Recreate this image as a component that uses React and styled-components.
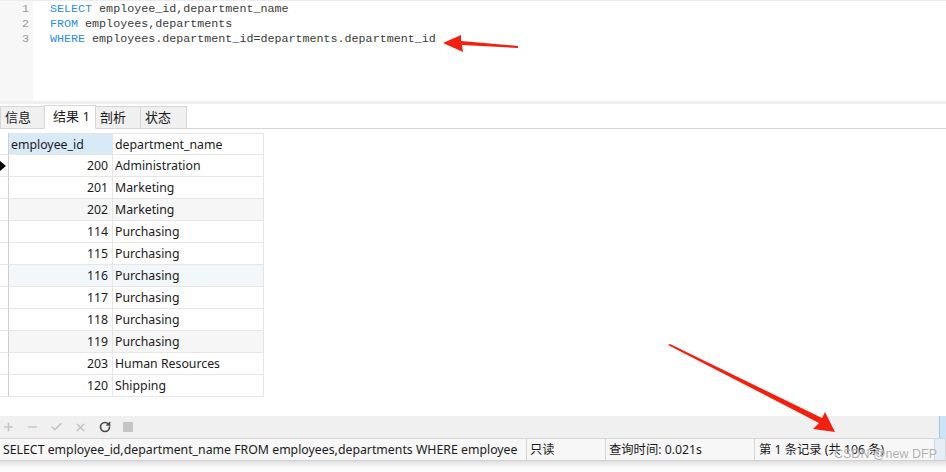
import React from "react";
import styled, { createGlobalStyle } from "styled-components";
import { Plus, Minus, Check, X, RotateCw } from "lucide-react";

const GlobalStyle = createGlobalStyle`
  body {
    margin: 0;
    background: #fff;
    overflow: hidden;
  }
`;

const UI_FONT = `"Noto Sans", "Noto Sans CJK SC", sans-serif`;

const Window = styled.div`
  position: relative;
  width: 946px;
  height: 472px;
  display: flex;
  flex-direction: column;
  font-family: ${UI_FONT};
  font-size: 12.3px;
  color: #1a1a1a;
  overflow: hidden;
`;

const Editor = styled.div`
  height: 101px;
  display: flex;
  border-top: 1px solid #ececec;
  box-sizing: border-box;
`;

const Gutter = styled.div`
  width: 33px;
  background: #f7f7f7;
  padding-top: 1px;
  box-sizing: border-box;
`;

const LineNo = styled.div`
  height: 15px;
  line-height: 15px;
  padding-right: 4px;
  text-align: right;
  font-family: "Liberation Mono", monospace;
  font-size: 11.7px;
  color: #9a9a9a;
`;

const Code = styled.div`
  flex: 1;
  padding: 1px 0 0 17px;
`;

const CodeLine = styled.div`
  height: 15px;
  line-height: 15px;
  font-family: "Liberation Mono", monospace;
  font-size: 11.7px;
  color: #3a3a3a;
  white-space: pre;
`;

const Kw = styled.span`
  color: #2b8cf0;
`;

const Band = styled.div`
  height: 3px;
  background: #efefef;
`;

const TabBar = styled.div`
  height: 25px;
  display: flex;
  align-items: flex-end;
  border-bottom: 1px solid #d6d6d6;
  box-sizing: border-box;
`;

const Tab = styled.div`
  height: ${(p) => (p.$active ? 24 : 22)}px;
  width: ${(p) => p.$w}px;
  box-sizing: border-box;
  padding-left: ${(p) => (p.$active ? 8 : 4)}px;
  line-height: 21px;
  background: ${(p) => (p.$active ? "#fff" : "#f0f0f0")};
  border: 1px solid #d6d6d6;
  border-bottom: ${(p) => (p.$active ? "1px solid #fff" : "none")};
  margin-bottom: ${(p) => (p.$active ? -1 : 0)}px;
  margin-left: ${(p) => (p.$first ? 0 : -1)}px;
  font-size: 13px;
`;

const Results = styled.div`
  flex: 1;
  padding-top: 4px;
`;

const Grid = styled.div`
  display: grid;
  grid-template-columns: 9px 104px 151px;
  width: 264px;
`;

const Cell = styled.div`
  height: 22px;
  line-height: 21px;
  box-sizing: border-box;
  border-right: 1px solid #e6e6e6;
  border-bottom: 1px solid #e6e6e6;
  padding: 0 ${(p) => (p.$num ? 4 : 2)}px;
  text-align: ${(p) => (p.$num ? "right" : "left")};
  background: ${(p) => p.$bg || "#fff"};
  white-space: nowrap;
  overflow: hidden;
`;

const HeadCell = styled(Cell)`
  background: ${(p) => (p.$sel ? "#d8e9f8" : "#fff")};
  border-top: 1px solid #e6e6e6;
`;

const Marker = styled.div`
  height: 22px;
  box-sizing: border-box;
  border-right: 1px solid #cfcfcf;
  border-bottom: 1px solid #e6e6e6;
  display: flex;
  align-items: center;
  &::before {
    content: "";
    display: ${(p) => (p.$current ? "block" : "none")};
    border-left: 6px solid #000;
    border-top: 5px solid transparent;
    border-bottom: 5px solid transparent;
  }
`;

const Toolbar = styled.div`
  height: 22px;
  background: #f0f0f0;
  display: flex;
  align-items: center;
  gap: 11px;
  padding-left: 2px;
  box-sizing: border-box;
`;

const ToolIcon = styled.span`
  width: 13px;
  height: 13px;
  display: flex;
  align-items: center;
  justify-content: center;
  color: ${(p) => (p.$on ? "#4a4a4a" : "#c4c4c4")};
`;

const Stop = styled.span`
  width: 10px;
  height: 10px;
  background: #c4c4c4;
  margin-left: 1px;
`;

const StatusBar = styled.div`
  height: 23px;
  display: flex;
  background: #f7f7f7;
  border-top: 1px solid #d6d6d6;
  border-bottom: 1px solid #cfcfcf;
  box-sizing: border-box;
`;

const StatusCell = styled.div`
  width: ${(p) => p.$w}px;
  flex: ${(p) => (p.$grow ? 1 : "none")};
  box-sizing: border-box;
  padding-left: ${(p) => p.$pad ?? 3}px;
  line-height: 21px;
  border-right: 1px solid #d6d6d6;
  white-space: nowrap;
  overflow: hidden;
  background: ${(p) => p.$bg || "transparent"};
`;

const Shadow = styled.div`
  height: 11px;
  background: linear-gradient(#e0e0e0, #fafafa 60%, #fff);
`;

const ScrollPiece = styled.div`
  position: absolute;
  right: 0;
  top: 416px;
  width: 6px;
  height: 22px;
  background: #cde3f6;
  border-left: 1px solid #9dc3e6;
`;

const Arrows = styled.svg`
  position: absolute;
  left: 0;
  top: 0;
  pointer-events: none;
`;

const Watermark = styled.div`
  position: absolute;
  left: 834px;
  top: 447px;
  font-family: "Liberation Sans", sans-serif;
  font-size: 12.5px;
  line-height: 15px;
  color: rgba(120, 120, 120, 0.6);
  text-shadow: 0 0 1px #fff;
  white-space: nowrap;
`;

const rows = [
  ["200", "Administration"],
  ["201", "Marketing"],
  ["202", "Marketing", "#f6f6f6"],
  ["114", "Purchasing"],
  ["115", "Purchasing"],
  ["116", "Purchasing", "#f2f7fc"],
  ["117", "Purchasing"],
  ["118", "Purchasing"],
  ["119", "Purchasing", "#f6f6f6"],
  ["203", "Human Resources"],
  ["120", "Shipping"],
];

export default function App() {
  return (
    <>
      <GlobalStyle />
      <Window>
        <Editor>
          <Gutter>
            <LineNo>1</LineNo>
            <LineNo>2</LineNo>
            <LineNo>3</LineNo>
          </Gutter>
          <Code>
            <CodeLine>
              <Kw>SELECT</Kw> employee_id,department_name
            </CodeLine>
            <CodeLine>
              <Kw>FROM</Kw> employees,departments
            </CodeLine>
            <CodeLine>
              <Kw>WHERE</Kw> employees.department_id=departments.department_id
            </CodeLine>
          </Code>
        </Editor>
        <Band />
        <TabBar>
          <Tab $w={45} $first>信息</Tab>
          <Tab $w={52} $active>结果 1</Tab>
          <Tab $w={46}>剖析</Tab>
          <Tab $w={47}>状态</Tab>
        </TabBar>
        <Results>
          <Grid>
            <Marker />
            <HeadCell $sel>employee_id</HeadCell>
            <HeadCell>department_name</HeadCell>
            {rows.map(([id, name, bg], i) => (
              <React.Fragment key={id}>
                <Marker $current={i === 0} />
                <Cell $num $bg={bg}>{id}</Cell>
                <Cell $bg={bg}>{name}</Cell>
              </React.Fragment>
            ))}
          </Grid>
        </Results>
        <Toolbar>
          <ToolIcon><Plus size={14} strokeWidth={3} /></ToolIcon>
          <ToolIcon><Minus size={14} strokeWidth={3} /></ToolIcon>
          <ToolIcon><Check size={14} strokeWidth={3} /></ToolIcon>
          <ToolIcon><X size={13} strokeWidth={3} /></ToolIcon>
          <ToolIcon $on><RotateCw size={12} strokeWidth={3.4} /></ToolIcon>
          <Stop />
        </Toolbar>
        <StatusBar>
          <StatusCell $w={527}>
            SELECT employee_id,department_name FROM employees,departments WHERE employee
          </StatusCell>
          <StatusCell $w={79}>只读</StatusCell>
          <StatusCell $w={149}>查询时间: 0.021s</StatusCell>
          <StatusCell $w={180} $pad={4}>第 1 条记录 (共 106 条)</StatusCell>
          <StatusCell $grow $bg="#e4eef8" />
        </StatusBar>
        <Shadow />
        <ScrollPiece />
        <Arrows width="946" height="472" viewBox="0 0 946 472">
          <polygon
            points="518,48 462,45 463,52 443,43 461,35 461,41 518,46"
            fill="#f4200f"
          />
          <polygon
            points="668,345 670,344 822,418 825,412 835,432 813,429 819,423"
            fill="#f4200f"
          />
        </Arrows>
        <Watermark>CSDN @new DFP</Watermark>
      </Window>
    </>
  );
}
